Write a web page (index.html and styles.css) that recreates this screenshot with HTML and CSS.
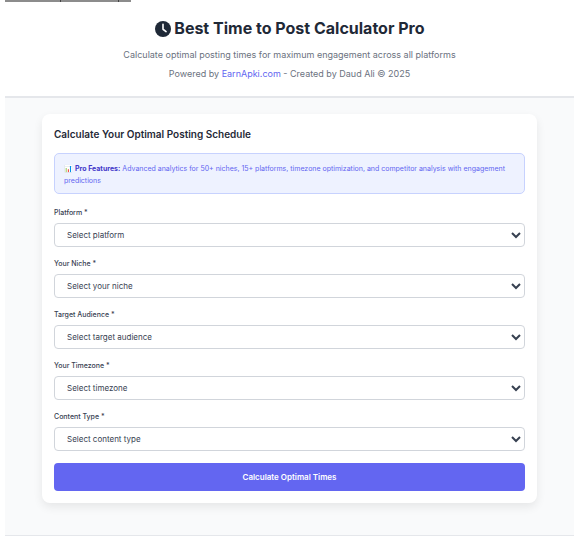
FILE: index.html
```html
<!DOCTYPE html>
<html lang="en">
<head>
    <meta charset="UTF-8">
    <meta name="viewport" content="width=device-width, initial-scale=1.0">
    <title>Best Time to Post Calculator Pro</title>
    <link rel="stylesheet" href="styles.css">
</head>
<body>
    <div class="top-strip">
        <span class="strip-cell cell-a"></span>
        <span class="strip-cell cell-b"></span>
        <span class="strip-cell cell-c"></span>
    </div>

    <header class="page-header">
        <h1>
            <svg class="clock" viewBox="0 0 24 24" aria-hidden="true">
                <circle cx="12" cy="12" r="12" fill="#1f2937"/>
                <path d="M12 5v7.4l4.6 3.4" fill="none" stroke="#fff" stroke-width="2.4" stroke-linecap="round" stroke-linejoin="round"/>
            </svg>
            Best Time to Post Calculator Pro
        </h1>
        <p class="subtitle">Calculate optimal posting times for maximum engagement across all platforms</p>
        <p class="credit">Powered by <a href="#">EarnApki.com</a> - Created by Daud Ali © 2025</p>
    </header>

    <main class="main">
        <form class="card">
            <h2>Calculate Your Optimal Posting Schedule</h2>

            <div class="info-box">
                <span class="chart-emoji">📊</span> <strong>Pro Features:</strong> Advanced analytics for 50+ niches, 15+ platforms, timezone optimization, and competitor analysis with engagement predictions
            </div>

            <div class="form-group">
                <label for="platform">Platform *</label>
                <select id="platform"><option>Select platform</option></select>
            </div>
            <div class="form-group">
                <label for="niche">Your Niche *</label>
                <select id="niche"><option>Select your niche</option></select>
            </div>
            <div class="form-group">
                <label for="audience">Target Audience *</label>
                <select id="audience"><option>Select target audience</option></select>
            </div>
            <div class="form-group">
                <label for="timezone">Your Timezone *</label>
                <select id="timezone"><option>Select timezone</option></select>
            </div>
            <div class="form-group">
                <label for="content-type">Content Type *</label>
                <select id="content-type"><option>Select content type</option></select>
            </div>

            <button type="button" class="calc-btn">Calculate Optimal Times</button>
        </form>
    </main>
</body>
</html>
```

FILE: styles.css
```css
* {
    box-sizing: border-box;
}
html, body {
    height: 540px;
    overflow: hidden;
}
body {
    margin: 0;
    padding-left: 5px;
    background-color: #fff;
    font-family: Inter, 'Noto Sans', sans-serif;
    color: #1f2937;
}
.top-strip {
    display: flex;
    width: 126px;
    height: 2px;
}
.strip-cell {
    height: 100%;
    background-color: #8c8c8c;
    border-right: 1px solid #444;
}
.cell-a { width: 56px; }
.cell-b { width: 58px; }
.cell-c { width: 12px; border-right: none; }
.page-header {
    height: 96px;
    padding-top: 15px;
    text-align: center;
    border-bottom: 2px solid #e5e7eb;
}
h1 {
    margin: 0 0 10px;
    font-size: 16px;
    line-height: 22px;
    font-weight: 700;
}
.clock {
    width: 16px;
    height: 16px;
    vertical-align: -3px;
}
.subtitle, .credit {
    margin: 0;
    font-size: 9px;
    line-height: 12px;
    color: #6b7280;
}
.credit {
    margin-top: 7px;
}
.credit a {
    color: #6366f1;
    text-decoration: none;
}
.main {
    height: 438px;
    padding: 16px 37px 0;
    background-color: #f9fafb;
    border-bottom: 1px solid #e5e7eb;
}
.card {
    height: 389px;
    padding: 14px 12px;
    background-color: #fff;
    border-radius: 8px;
    box-shadow: 0 4px 10px rgba(0, 0, 0, 0.08);
}
h2 {
    margin: 0 0 12px;
    font-size: 10px;
    line-height: 13px;
    font-weight: 600;
}
.info-box {
    height: 41px;
    margin-bottom: 12px;
    padding: 9px;
    font-size: 7px;
    line-height: 12px;
    color: #6366f1;
    background-color: #eef2ff;
    border: 1px solid #c7d2fe;
    border-radius: 5px;
}
.info-box strong {
    color: #4338ca;
}
.form-group {
    margin-bottom: 10px;
}
label {
    display: block;
    margin-bottom: 4px;
    font-size: 7px;
    line-height: 13px;
    font-weight: 500;
    color: #374151;
}
select {
    display: block;
    width: 100%;
    height: 24px;
    padding: 0 8px;
    font-family: inherit;
    font-size: 8px;
    color: #374151;
    background-color: #fff;
    border: 1px solid #d1d5db;
    border-radius: 4px;
}
.calc-btn {
    display: block;
    width: 100%;
    height: 28px;
    margin-top: 12px;
    font-family: inherit;
    font-size: 8px;
    font-weight: 600;
    color: #fff;
    background-color: #6366f1;
    border: none;
    border-radius: 4px;
}
```
